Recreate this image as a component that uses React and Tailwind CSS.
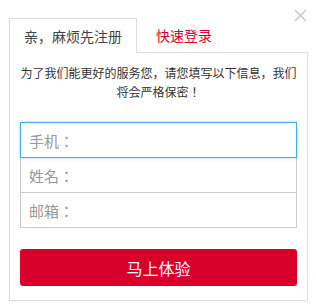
import React from 'react';

const font = { fontFamily: '"Microsoft YaHei", "Noto Sans CJK SC", sans-serif' };
// JP face centres the full-width colon and exclamation mark, like the original
const jp = { fontFamily: '"Noto Sans CJK JP", "Noto Sans CJK SC", sans-serif' };

const CloseIcon = () => (
    <svg width="13" height="13" viewBox="0 0 13 13" className="block">
        <path d="M1 1 L12 12 M12 1 L1 12" stroke="#c8c8c8" strokeWidth="1.5" fill="none" />
    </svg>
);

const App = () => {
    return (
        <div className="relative w-[316px] h-[308px] bg-white" style={font}>
            <button className="absolute right-[9px] top-[9px] p-0 bg-transparent">
                <CloseIcon />
            </button>

            <div className="pt-[18px] pl-[9px] w-[308px]">
                {/* tabs */}
                <div className="flex h-[35px]">
                    <div className="w-[128px] border border-b-0 border-[#dcdcdc] flex items-center justify-center text-[14px] text-[#444]">
                        亲，麻烦先注册
                    </div>
                    <div className="flex-1 border-b border-[#dcdcdc] flex items-center pl-[19px] text-[14px] text-[#d7002a]">
                        快速登录
                    </div>
                </div>

                {/* content */}
                <div className="border border-t-0 border-[#dcdcdc] px-[10px] pt-[10px] pb-[14px]">
                    <p className="text-[12px] leading-[19px] text-[#333] text-center" style={jp}>
                        为了我们能更好的服务您，请您填写以下信息，我们将会严格保密！
                    </p>

                    <div className="mt-[21px] flex flex-col" style={jp}>
                        <input
                            autoFocus
                            placeholder="手机："
                            className="relative z-10 h-[36px] px-[8px] border border-[#48a9ec] shadow-[0_0_3px_rgba(72,169,236,0.5)] outline-none text-[15px] text-[#333] placeholder:text-[#999]"
                        />
                        <input
                            placeholder="姓名："
                            className="-mt-px h-[36px] px-[8px] border border-[#cccccc] outline-none text-[15px] text-[#333] placeholder:text-[#999]"
                        />
                        <input
                            placeholder="邮箱："
                            className="-mt-px h-[36px] px-[8px] border border-[#cccccc] outline-none text-[15px] text-[#333] placeholder:text-[#999]"
                        />
                    </div>

                    <button className="mt-[21px] w-full h-[37px] rounded-[3px] bg-[#d7002a] text-white text-[16px]">
                        马上体验
                    </button>
                </div>
            </div>
        </div>
    );
};

export default App;
